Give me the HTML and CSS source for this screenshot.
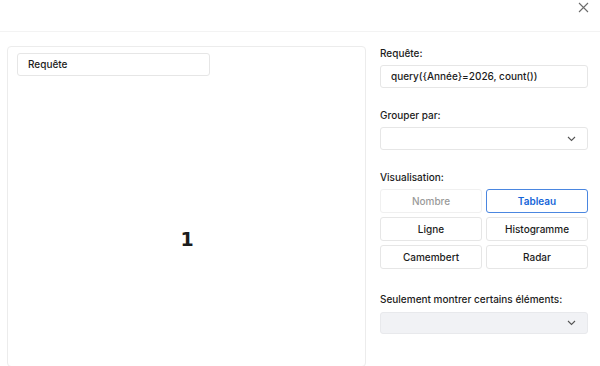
FILE: index.html
```html
<!DOCTYPE html>
<html lang="fr">
<head>
<meta charset="utf-8">
<link rel="stylesheet" href="styles.css">
</head>
<body>
<div class="modal">
  <header class="topbar">
    <button class="close" aria-label="Fermer">
      <svg width="11" height="11" viewBox="0 0 11 11"><path d="M1 1L10 10M10 1L1 10" stroke="#6b6b6b" stroke-width="1.1" fill="none"/></svg>
    </button>
  </header>
  <main class="content">
    <section class="preview">
      <div class="title-input">Requête</div>
      <div class="result">1</div>
    </section>
    <aside class="form">
      <label class="label">Requête:</label>
      <div class="input">query({Année}=2026, count())</div>

      <label class="label gap">Grouper par:</label>
      <div class="select">
        <svg width="9" height="6" viewBox="0 0 9 6"><path d="M1 1L4.5 4.5L8 1" stroke="#555" stroke-width="1.1" fill="none"/></svg>
      </div>

      <label class="label gap">Visualisation:</label>
      <div class="viz">
        <button class="vbtn disabled">Nombre</button>
        <button class="vbtn active">Tableau</button>
        <button class="vbtn">Ligne</button>
        <button class="vbtn">Histogramme</button>
        <button class="vbtn">Camembert</button>
        <button class="vbtn">Radar</button>
      </div>

      <label class="label gap2">Seulement montrer certains éléments:</label>
      <div class="select grey">
        <svg width="9" height="6" viewBox="0 0 9 6"><path d="M1 1L4.5 4.5L8 1" stroke="#555" stroke-width="1.1" fill="none"/></svg>
      </div>
    </aside>
  </main>
</div>
</body>
</html>
```
FILE: styles.css
```css
* { box-sizing: border-box; }
html, body { margin: 0; padding: 0; background: #fff; overflow: hidden; }
body {
  font-family: Inter, "Noto Sans", "Liberation Sans", sans-serif;
  color: #1c1c1c;
  width: 600px;
  height: 366px;
}
.modal { height: 366px; overflow: hidden; }
.topbar {
  height: 32px;
  border-bottom: 1px solid #f3f3f3;
  display: flex;
  justify-content: flex-end;
  align-items: flex-start;
  padding: 2px 11px 0 0;
}
.close {
  border: 0;
  background: none;
  padding: 0;
  width: 11px;
  height: 11px;
  display: flex;
}
.content {
  display: flex;
  padding: 14px 12px 0 7px;
  gap: 14px;
  height: 334px;
}
.preview {
  width: 359px;
  flex: none;
  height: 321px;
  border: 1px solid #ececec;
  border-radius: 4px;
  padding: 6px 9px 0;
  display: flex;
  flex-direction: column;
}
.title-input {
  width: 193px;
  height: 23px;
  border: 1px solid #e6e6e6;
  border-radius: 3px;
  font-size: 10px;
  font-weight: 500;
  line-height: 21px;
  padding-left: 10px;
}
.result {
  flex: 1;
  display: flex;
  justify-content: center;
  padding-top: 152px;
  padding-left: 1px;
  font-family: "DejaVu Sans", sans-serif;
  font-size: 19px;
  font-weight: 700;
  line-height: 22px;
}
.form {
  flex: 1;
  display: flex;
  flex-direction: column;
}
.label {
  font-size: 10px;
  font-weight: 500;
  line-height: 14px;
  margin-bottom: 5px;
  color: #1c1c1c;
}
.label.gap { margin-top: 20px; margin-bottom: 5px; }
.label.gap2 { margin-top: 23px; margin-bottom: 6px; }
.input, .select {
  height: 23px;
  border: 1px solid #e6e6e6;
  border-radius: 3px;
  font-size: 10px;
  font-weight: 500;
  line-height: 21px;
  padding-left: 10px;
}
.select {
  display: flex;
  align-items: center;
  justify-content: flex-end;
  padding-right: 11px;
}
.select.grey { background: #f1f2f5; border-color: #e8e9ec; height: 22px; }
.viz {
  display: grid;
  grid-template-columns: 1fr 1fr;
  gap: 4px 4px;
}
.vbtn {
  height: 24px;
  border: 1px solid #e6e6e6;
  border-radius: 3px;
  background: #fff;
  font-family: inherit;
  font-size: 10px;
  font-weight: 500;
  color: #1c1c1c;
  padding: 0;
}
.vbtn.disabled { color: #9a9a9a; border-color: #f0f0f0; }
.vbtn.active { color: #1565d8; border-color: #4a86e0; font-weight: 600; }
```
